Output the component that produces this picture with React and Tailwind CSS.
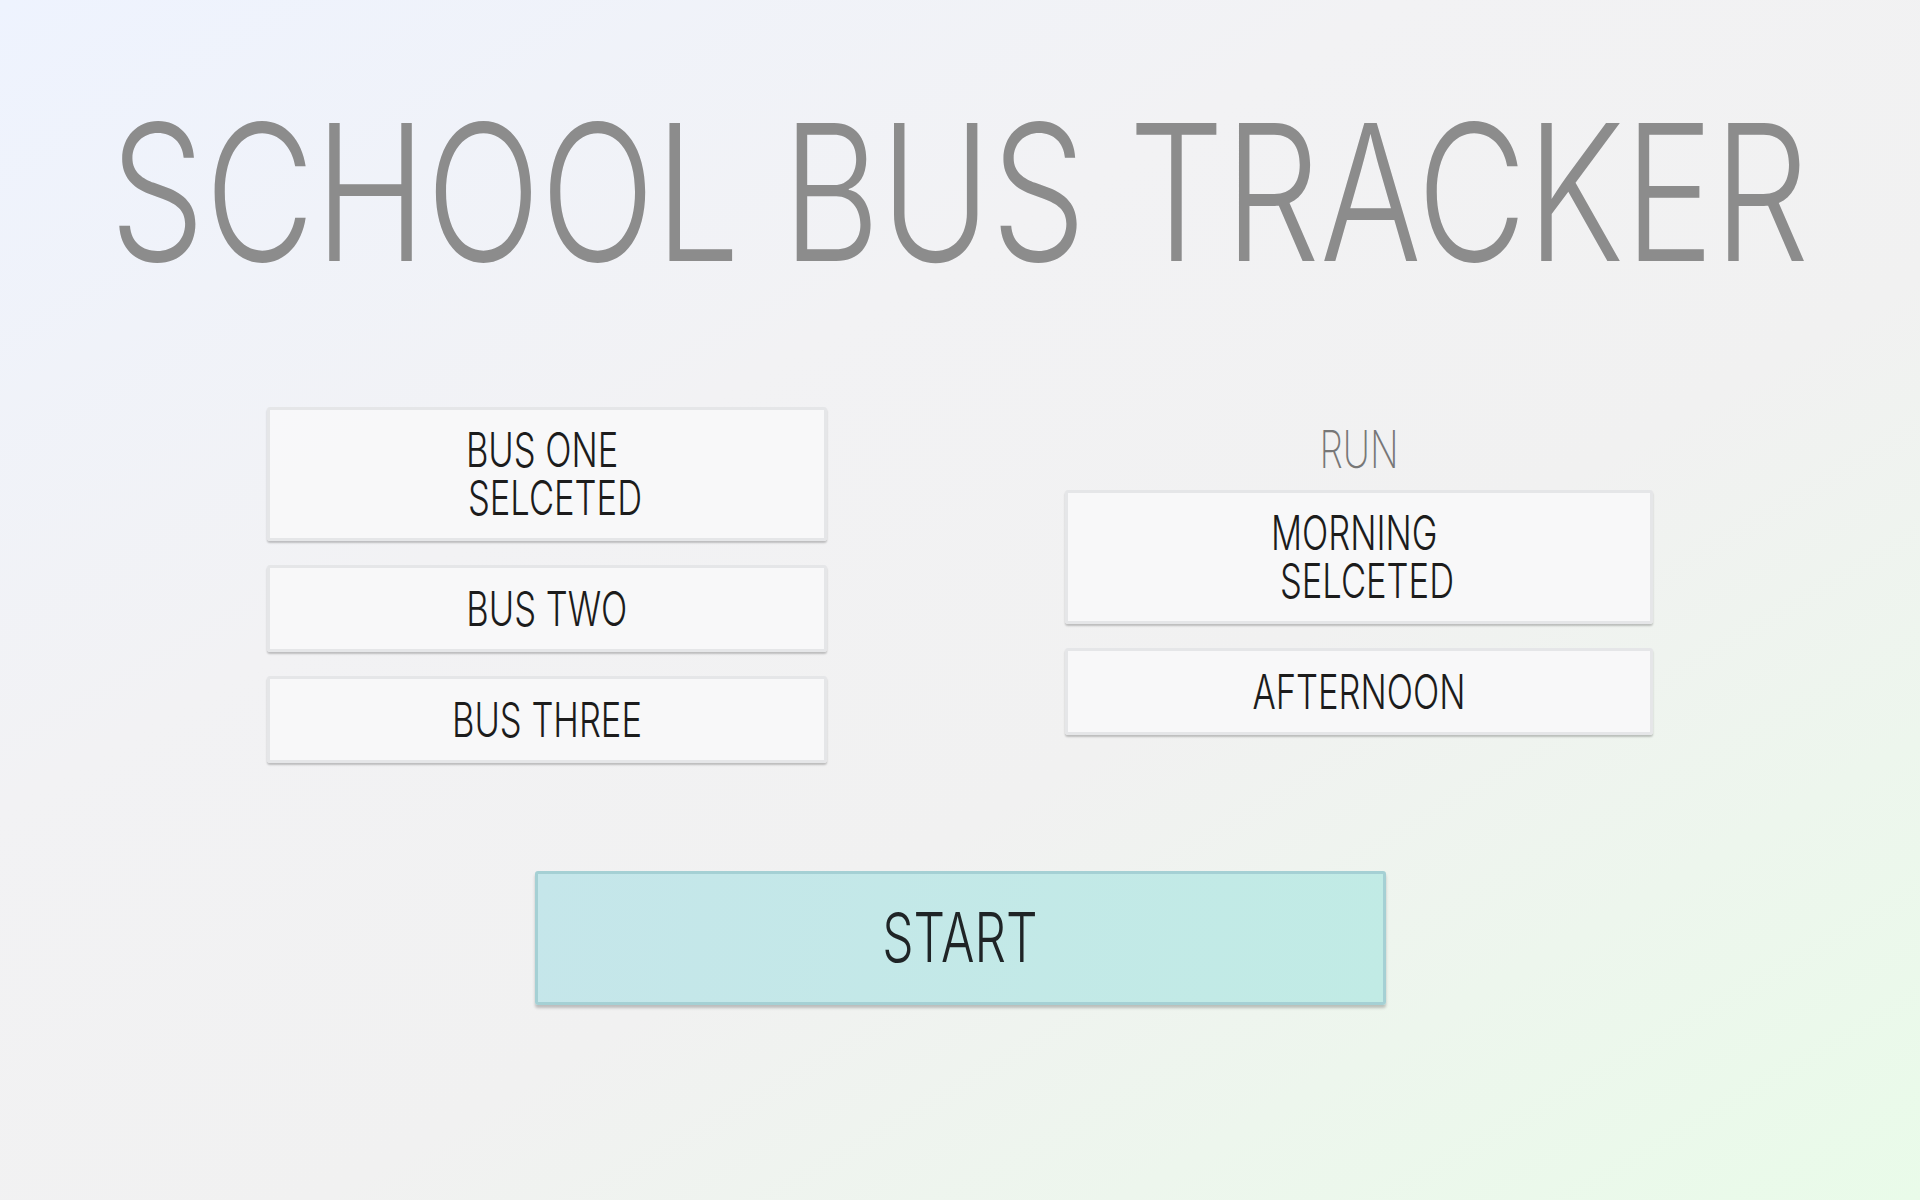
import React, { useState } from "react";

const BUSES = ["BUS ONE", "BUS TWO", "BUS THREE"];
const RUNS = ["MORNING", "AFTERNOON"];

function OptionButton({ label, selected, onClick }) {
  return (
    <button
      onClick={onClick}
      className={`w-full flex items-center justify-center rounded-[3px] border-[3px] border-[#e5e6e8] bg-[#f8f8fa]/90 shadow-[0_2px_2px_rgba(0,0,0,0.22)] text-[#1c1c1c] ${
        selected ? "h-[134px]" : "h-[87px]"
      }`}
    >
      <span className="inline-block whitespace-pre text-center leading-[48px] text-[48px] font-light scale-x-[.72]">
        {selected ? `${label}\u00a0\n\u00a0\u2009SELCETED` : label}
      </span>
    </button>
  );
}

export default function App() {
  const [bus, setBus] = useState(0);
  const [run, setRun] = useState(0);

  return (
    <div
      className="min-h-[1200px] w-full overflow-hidden bg-[linear-gradient(150deg,#eef3fe_0%,#f2f2f4_35%,#f1f1f1_60%,#e9fbe9_100%)]"
      style={{ fontFamily: "Inter, 'Liberation Sans', sans-serif" }}
    >
      {/* Title */}
      <div className="pt-[92px] flex justify-center">
        <h1 className="shrink-0 text-[190px] leading-[200px] font-light text-[#8c8c8c] whitespace-nowrap scale-x-[.793]">
          SCHOOL BUS TRACKER
        </h1>
      </div>

      {/* Options */}
      <div className="mt-[115px] flex justify-center gap-[238px]">
        <div className="w-[560px] flex flex-col gap-[24px]">
          {BUSES.map((item, index) => (
            <OptionButton
              key={item}
              label={item}
              selected={bus === index}
              onClick={() => setBus(index)}
            />
          ))}
        </div>

        <div className="w-[588px] flex flex-col gap-[24px]">
          <div className="h-[59px] pt-[26px] flex items-center justify-center text-[52px] font-extralight text-[#777] leading-none">
            <span className="scale-x-[.72]">RUN</span>
          </div>
          {RUNS.map((item, index) => (
            <OptionButton
              key={item}
              label={item}
              selected={run === index}
              onClick={() => setRun(index)}
            />
          ))}
        </div>
      </div>

      {/* Start */}
      <div className="mt-[108px] flex justify-center">
        <button className="w-[851px] h-[134px] rounded-[3px] border-[3px] border-[#a5d0d4] bg-[linear-gradient(100deg,#c5e6ea,#c1ebe5)] shadow-[0_3px_3px_rgba(0,0,0,0.22)] text-[#1f2426] text-[69px] font-light">
          <span className="inline-block scale-x-[.72]">START</span>
        </button>
      </div>
    </div>
  );
}
